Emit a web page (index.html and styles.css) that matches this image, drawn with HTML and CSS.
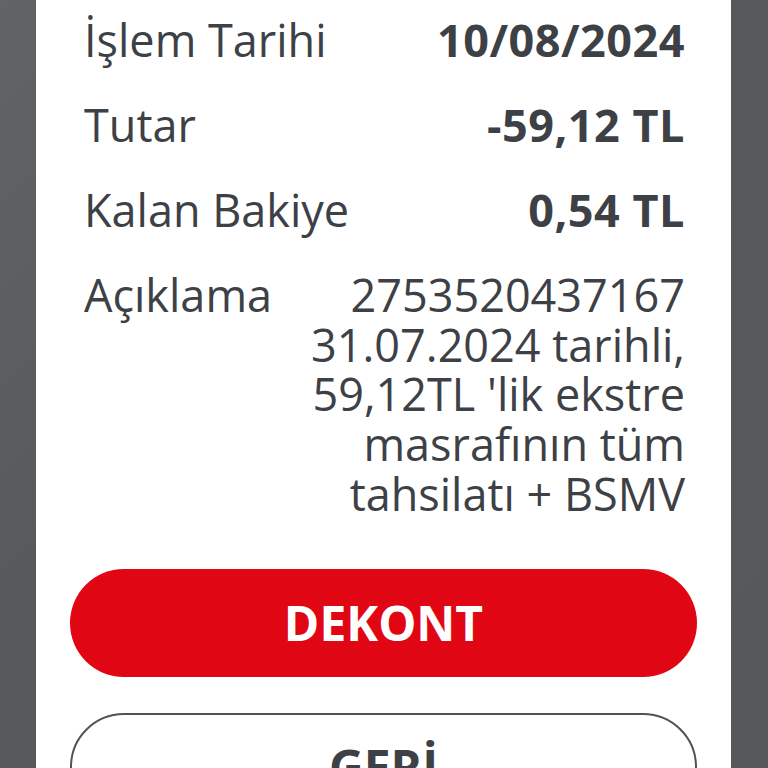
FILE: index.html
```html
<!DOCTYPE html>
<html>
<head>
  <meta charset="UTF-8">
  <title>İşlem Detayı</title>
  <link rel="stylesheet" href="styles.css">
</head>
<body>
  <div class="card">
    <div class="row">
      <span class="label">İşlem Tarihi</span>
      <span class="value">10/08/2024</span>
    </div>
    <div class="row">
      <span class="label">Tutar</span>
      <span class="value">-59,12 TL</span>
    </div>
    <div class="row">
      <span class="label">Kalan Bakiye</span>
      <span class="value">0,54 TL</span>
    </div>
    <div class="row">
      <span class="label">Açıklama</span>
      <span class="desc">2753520437167<br>31.07.2024 tarihli,<br>59,12TL 'lik ekstre<br>masrafının tüm<br>tahsilatı + BSMV</span>
    </div>

    <div class="actions">
      <button class="btn btn-primary">DEKONT</button>
      <button class="btn btn-outline">GERİ</button>
    </div>
  </div>
</body>
</html>
```

FILE: styles.css
```css
body {
  background-color: #58595b;
  background-image: linear-gradient(135deg, #626365 0%, #58595b 40%, #57585a 100%);
  margin: 0;
  height: 768px;
  overflow: hidden;
  font-family: "Open Sans", Lato, sans-serif;
  color: #3d4146;
}

.card {
  background-color: #fff;
  margin: 0 37px 0 36px;
  padding: 15px 46px 0 48px;
  height: 768px;
  box-sizing: border-box;
  overflow: hidden;
}

.row {
  display: flex;
  justify-content: space-between;
  align-items: flex-start;
  font-size: 45px;
  line-height: 50px;
  margin-bottom: 35px;
}

.label {
  white-space: nowrap;
}

.value {
  font-weight: 700;
  letter-spacing: 0.5px;
  text-align: right;
}

.desc {
  text-align: right;
  line-height: 49.7px;
}

.actions {
  display: flex;
  flex-direction: column;
  gap: 36px;
  margin: 50px -12px 0 -14px;
}

.btn {
  flex-shrink: 0;
  height: 108px;
  border-radius: 54px;
  font-family: "Open Sans", sans-serif;
  font-weight: 700;
  font-size: 48px;
  cursor: pointer;
}

.btn-primary {
  background-color: #e10613;
  color: #fff;
  border: none;
}

.btn-outline {
  background-color: #fff;
  color: #3d4146;
  border: 2px solid #4f5256;
}
```
